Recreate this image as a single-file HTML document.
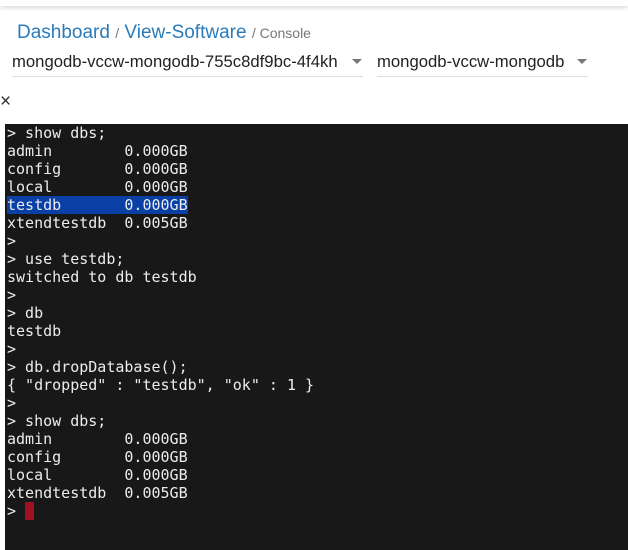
<html><head><style>
body{margin:0;width:628px;height:550px;overflow:hidden;background:#fff;font-family:"Liberation Sans",sans-serif;position:relative}
.top{position:absolute;left:0;top:0;width:628px;height:6px;box-shadow:0 2px 5px rgba(0,0,0,.15);background:#fff}
.bc{position:absolute;left:17px;top:22px;font-size:19px;color:#2b7bb9;white-space:nowrap}
.bc .s{font-size:14px;color:#777}
.sel{position:absolute;top:52px;height:24px;border-bottom:1px solid #ddd;font-size:16.7px;color:#222;white-space:nowrap}
.arr{position:absolute;top:7px;width:0;height:0;border-left:5px solid transparent;border-right:5px solid transparent;border-top:5px solid #777}
.x{position:absolute;left:0;top:91px;font-size:19px;color:#333}
.term{position:absolute;left:5px;top:124px;width:623px;height:426px;background:#181818;color:#ececec;font-family:"DejaVu Sans Mono",monospace;font-size:15px;line-height:18px;white-space:pre;padding-left:2px;box-sizing:border-box}
.hl{background:#0a3fa6}
.cur{display:inline-block;width:9px;height:18px;background:#a01020;vertical-align:top}
</style></head><body>
<div class="top"></div>
<div class="bc">Dashboard <span class="s">/</span> View-Software <span class="s">/ Console</span></div>
<div class="sel" style="left:12px;width:351px">mongodb-vccw-mongodb-755c8df9bc-4f4kh<span class="arr" style="left:340px"></span></div>
<div class="sel" style="left:377px;width:211px">mongodb-vccw-mongodb<span class="arr" style="left:200px"></span></div>
<div class="x">×</div>
<div class="term">&gt; show dbs;
admin        0.000GB
config       0.000GB
local        0.000GB
<span class="hl">testdb       0.000GB</span>
xtendtestdb  0.005GB
&gt;
&gt; use testdb;
switched to db testdb
&gt;
&gt; db
testdb
&gt;
&gt; db.dropDatabase();
{ "dropped" : "testdb", "ok" : 1 }
&gt;
&gt; show dbs;
admin        0.000GB
config       0.000GB
local        0.000GB
xtendtestdb  0.005GB
&gt; <span class="cur"></span></div>
</body></html>
